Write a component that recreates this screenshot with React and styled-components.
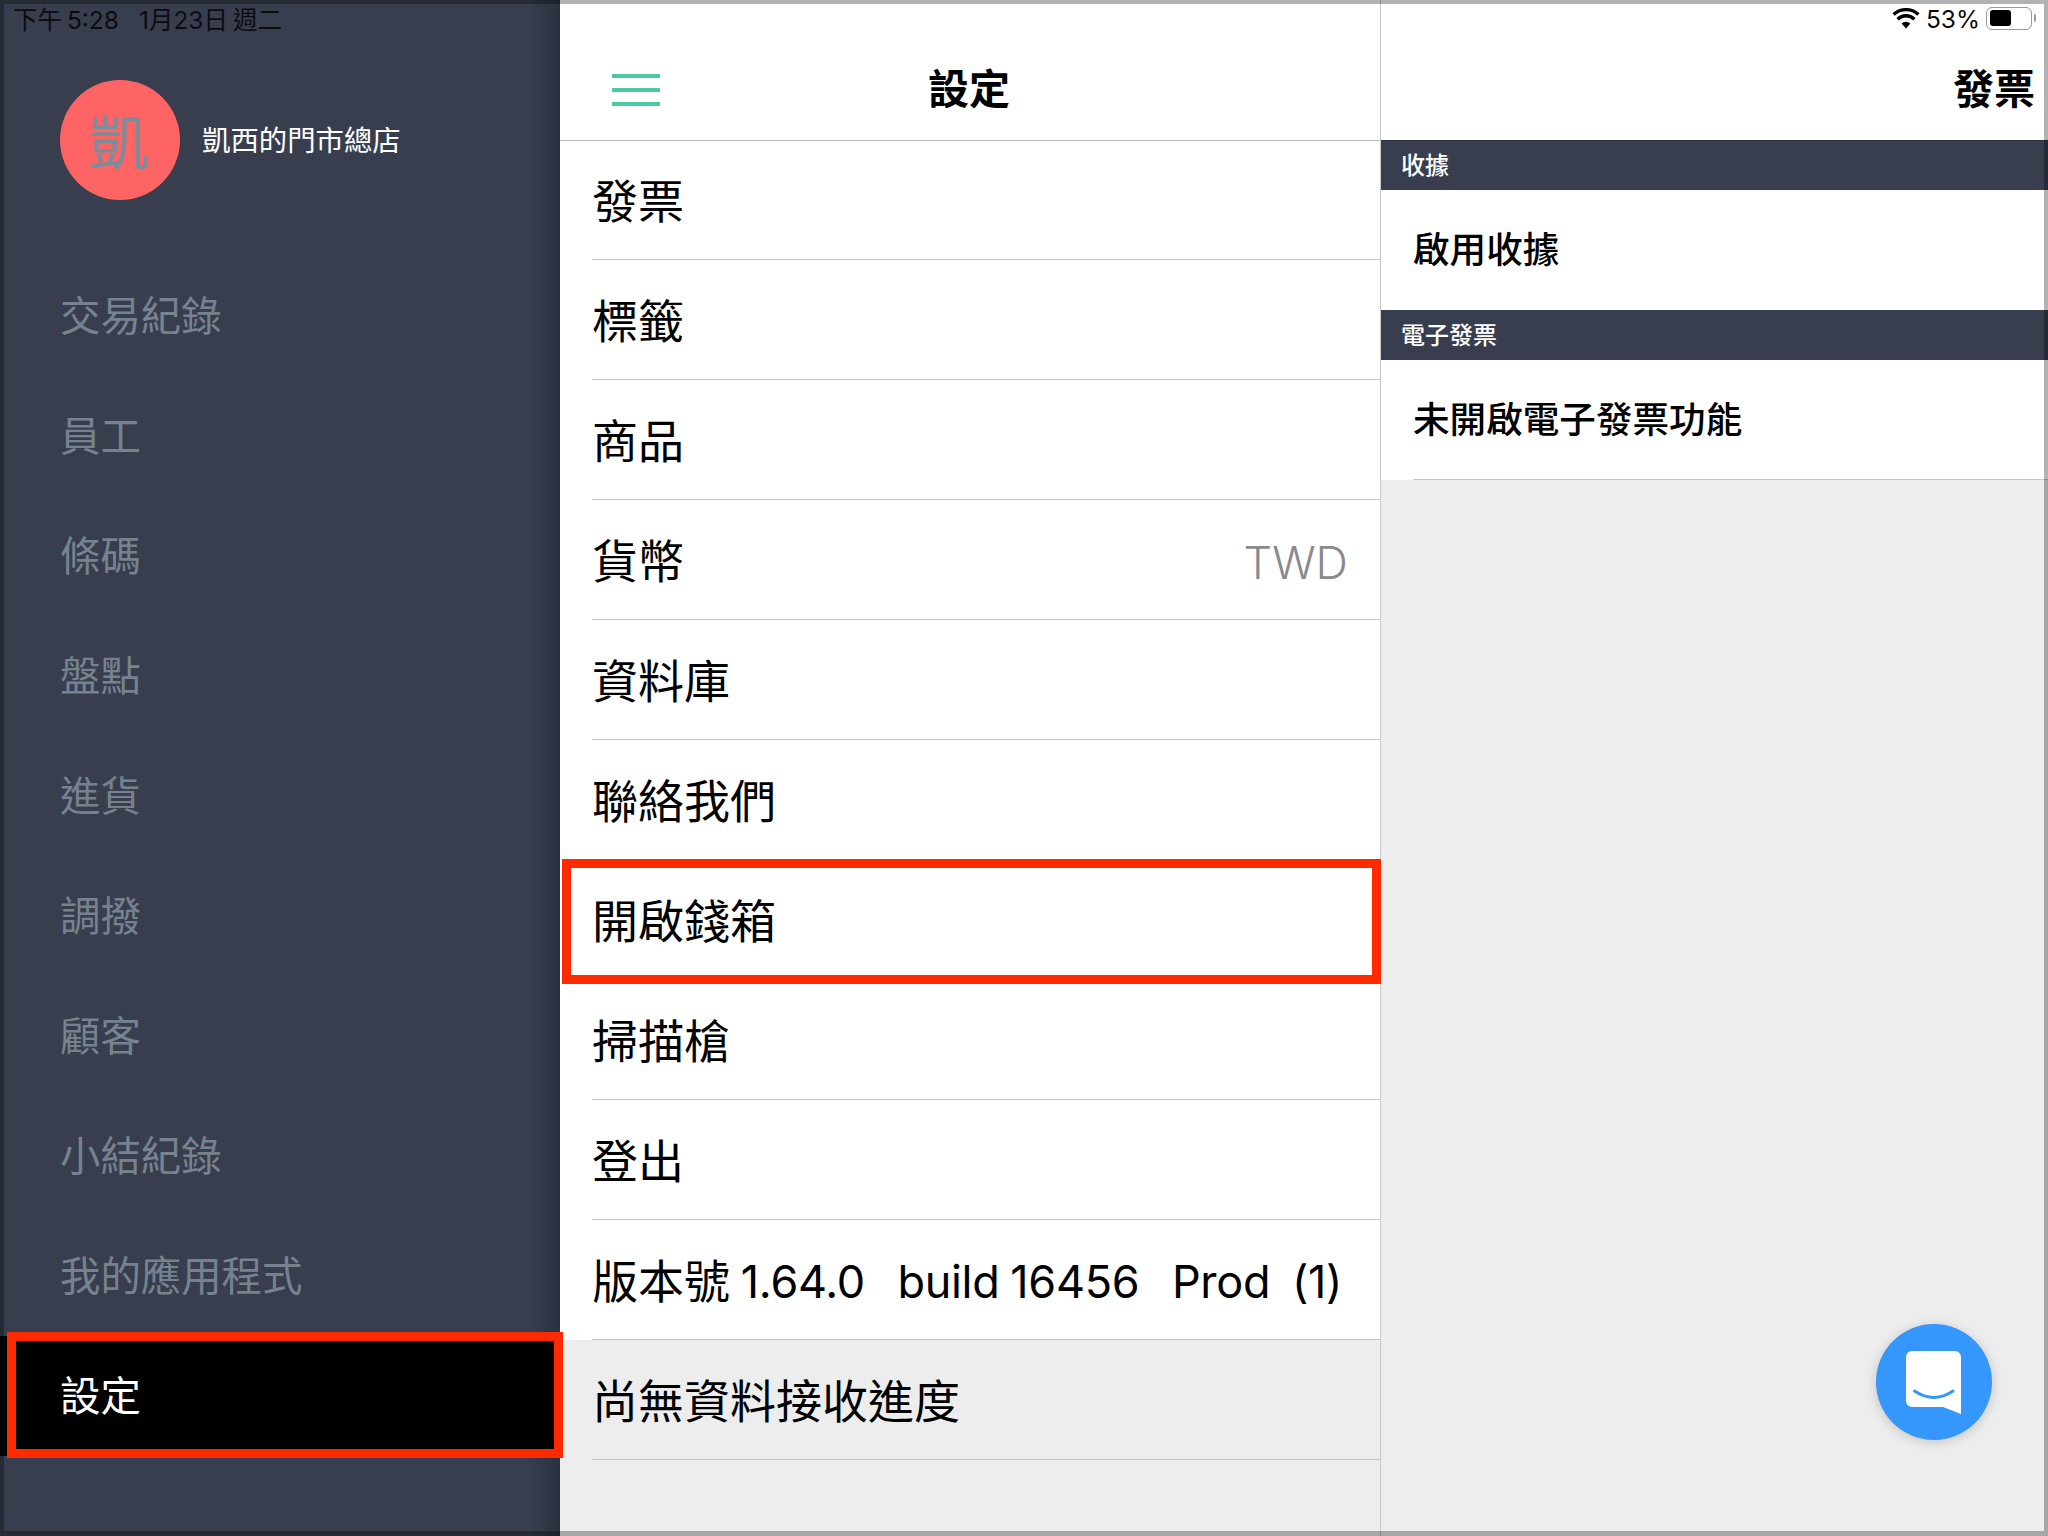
import React from 'react'
import styled, { createGlobalStyle } from 'styled-components'

const fontStack = `Inter, "Noto Sans CJK TC", sans-serif`

const GlobalStyle = createGlobalStyle`
    html, body {
        margin: 0;
        padding: 0;
        background: #ededed;
    }
    * {
        box-sizing: border-box;
    }
`

const Page = styled.div`
    position: relative;
    width: 2048px;
    height: 1536px;
    overflow: hidden;
    display: grid;
    grid-template-columns: 560px 821px 667px;
    font-family: ${fontStack};
    color: #000;
`

// translucent edge of the screenshot, it darkens whatever is under it
const ScreenEdge = styled.div`
    position: absolute;
    inset: 0;
    border: 4px solid rgba(0, 0, 0, 0.3);
    border-bottom-width: 5px;
    pointer-events: none;
`

// status bar sits on top of all three columns
const StatusBar = styled.div`
    position: absolute;
    top: 2px;
    left: 13px;
    right: 16px;
    height: 32px;
    display: flex;
    align-items: center;
    justify-content: space-between;
    font-size: 24.5px;
    color: #0c0c10;
`

const StatusLeft = styled.div`
    display: flex;
    gap: 20px;
    white-space: pre;
    word-spacing: -2px;
`

const StatusRight = styled.div`
    display: flex;
    align-items: center;
    gap: 6px;
`

const BatteryPercent = styled.span`
    padding-top: 2px;
`

const Battery = styled.div`
    position: relative;
    width: 46px;
    height: 23px;
    padding: 2px 3px;
    border: 1.5px solid #999;
    border-radius: 6px;
    &::before {
        content: '';
        display: block;
        width: 21px;
        height: 16px;
        background: #000;
        border-radius: 3px;
    }
    &::after {
        content: '';
        position: absolute;
        top: 6px;
        right: -5px;
        width: 2px;
        height: 8px;
        background: #999;
        border-radius: 0 2px 2px 0;
    }
`

const Sidebar = styled.aside`
    background: linear-gradient(to right, #383e4e 528px, #2c3140 560px);
`

const Profile = styled.div`
    height: 256px;
    padding: 80px 0 0 60px;
    display: flex;
    gap: 22px;
`

const Avatar = styled.div`
    width: 120px;
    height: 120px;
    padding: 0 2px 4px 0;
    border-radius: 50%;
    background: #ff6464;
    color: #7b8c9b;
    font-size: 60px;
    display: flex;
    align-items: center;
    justify-content: center;
`

const StoreName = styled.div`
    height: 120px;
    padding-bottom: 4px;
    display: flex;
    align-items: center;
    color: #fff;
    font-size: 28.4px;
`

const NavItem = styled.div`
    height: 120px;
    padding: 0 0 5px 60px;
    display: flex;
    align-items: center;
    font-size: 40.4px;
    color: ${props => (props.$active ? '#fff' : '#76838f')};
    background: ${props => (props.$active ? '#000' : 'transparent')};
`

const Middle = styled.section`
    border-right: 1px solid #c8c8c8;
    background: #ededed;
    display: flex;
    flex-direction: column;
`

const Header = styled.header`
    position: relative;
    height: 140px;
    flex: none;
    background: #fff;
    display: flex;
    align-items: center;
    font-size: 41px;
    font-weight: 700;
`

const MiddleHeader = styled(Header)`
    justify-content: center;
    padding: 31px 2px 0 0;
    box-shadow: 0 1px 0 #b9b9b9;
`

const Hamburger = styled.div`
    position: absolute;
    left: 52px;
    top: 74px;
    width: 48px;
    height: 32px;
    display: flex;
    flex-direction: column;
    justify-content: space-between;
    span {
        height: 4px;
        background: #4cc8a4;
    }
`

const Row = styled.div`
    height: 120px;
    flex: none;
    padding-left: 32px;
    background: ${props => (props.$muted ? '#ededed' : '#fff')};
`

const RowInner = styled.div`
    height: 100%;
    padding: 0 32px 3px 0;
    display: flex;
    align-items: center;
    justify-content: space-between;
    border-bottom: 1px solid #c6c6c6;
    font-size: 46px;
    white-space: pre;
`

const RowValue = styled.span`
    padding-top: 8px;
    color: #8a8a8e;
    font-size: 45px;
    font-weight: 300;
`

const VersionNumbers = styled.span`
    font-size: 45px;
    letter-spacing: -0.3px;
    word-spacing: -1.5px;
`

const RightPanel = styled.section`
    background: #ededed;
    display: flex;
    flex-direction: column;
`

const RightHeader = styled(Header)`
    justify-content: flex-end;
    padding: 31px 13px 0 0;
    box-shadow: 0 1px 0 #2c3140;
`

const SectionBar = styled.div`
    height: 50px;
    padding: 0 0 4px 20px;
    display: flex;
    align-items: center;
    background: #383e4e;
    color: #fff;
    font-size: 24px;
    font-weight: 500;
`

const DetailRow = styled.div`
    height: 120px;
    padding-left: 32px;
    background: #fff;
`

const DetailText = styled.div`
    height: 100%;
    padding-bottom: 5px;
    display: flex;
    align-items: center;
    font-size: 36.6px;
    font-weight: 500;
    border-bottom: ${props => (props.$line ? '1px solid #c6c6c6' : 'none')};
`

const ChatButton = styled.div`
    position: absolute;
    left: 1876px;
    top: 1324px;
    width: 116px;
    height: 116px;
    border-radius: 50%;
    background: #3596fc;
    box-shadow: 0 2px 12px rgba(0, 0, 0, 0.18);
`

// the red annotation frames drawn over the screenshot
const Callout = styled.div`
    position: absolute;
    left: ${props => props.$x}px;
    top: ${props => props.$y}px;
    width: ${props => props.$w}px;
    height: ${props => props.$h}px;
    border: 9px solid #ff2a00;
`

const navItems = ['交易紀錄', '員工', '條碼', '盤點', '進貨', '調撥', '顧客', '小結紀錄', '我的應用程式']

const settingRows = [
    { label: '發票' },
    { label: '標籤' },
    { label: '商品' },
    { label: '貨幣', value: 'TWD' },
    { label: '資料庫' },
    { label: '聯絡我們' },
    { label: '開啟錢箱' },
    { label: '掃描槍' },
    { label: '登出' },
]

function WifiIcon() {
    return (
        <svg width="28" height="21" viewBox="0 0 28 21">
            <path d="M14 20.5 L9.6 15.6 A6.4 6.4 0 0 1 18.4 15.6 Z" fill="#000" />
            <path d="M5.6 11.2 A12 12 0 0 1 22.4 11.2" fill="none" stroke="#000" strokeWidth="3.4" />
            <path d="M1.6 6.6 A18 18 0 0 1 26.4 6.6" fill="none" stroke="#000" strokeWidth="3.4" />
        </svg>
    );
}

function ChatIcon() {
    return (
        <svg width="116" height="116" viewBox="0 0 116 116">
            <path d="M36 27 H79 A6 6 0 0 1 85 33 V90 L67 83 H36 A6 6 0 0 1 30 77 V33 A6 6 0 0 1 36 27 Z" fill="#fff" />
            <path d="M38.5 67 Q58 80 77 67" fill="none" stroke="#3596fc" strokeWidth="3" strokeLinecap="round" />
        </svg>
    );
}

export default function App() {
    return (
        <Page>
            <GlobalStyle />
            <Sidebar>
                <Profile>
                    <Avatar>凱</Avatar>
                    <StoreName>凱西的門市總店</StoreName>
                </Profile>
                {navItems.map(item => <NavItem key={item}>{item}</NavItem>)}
                <NavItem $active>設定</NavItem>
            </Sidebar>

            <Middle>
                <MiddleHeader>
                    <Hamburger><span /><span /><span /></Hamburger>
                    設定
                </MiddleHeader>
                {settingRows.map(row => (
                    <Row key={row.label}>
                        <RowInner>
                            {row.label}
                            {row.value && <RowValue>{row.value}</RowValue>}
                        </RowInner>
                    </Row>
                ))}
                <Row>
                    <RowInner>
                        <span>版本號<VersionNumbers> 1.64.0   build 16456   Prod  (1)</VersionNumbers></span>
                    </RowInner>
                </Row>
                <Row $muted>
                    <RowInner>尚無資料接收進度</RowInner>
                </Row>
            </Middle>

            <RightPanel>
                <RightHeader>發票</RightHeader>
                <SectionBar>收據</SectionBar>
                <DetailRow><DetailText>啟用收據</DetailText></DetailRow>
                <SectionBar>電子發票</SectionBar>
                <DetailRow><DetailText $line>未開啟電子發票功能</DetailText></DetailRow>
            </RightPanel>

            <ScreenEdge />

            <StatusBar>
                <StatusLeft>
                    <span>下午 5:28</span>
                    <span>1月23日 週二</span>
                </StatusLeft>
                <StatusRight>
                    <WifiIcon />
                    <BatteryPercent>53%</BatteryPercent>
                    <Battery />
                </StatusRight>
            </StatusBar>

            <ChatButton><ChatIcon /></ChatButton>
            <Callout $x={7} $y={1332} $w={556} $h={126} />
            <Callout $x={562} $y={859} $w={819} $h={125} />
        </Page>
    );
}
